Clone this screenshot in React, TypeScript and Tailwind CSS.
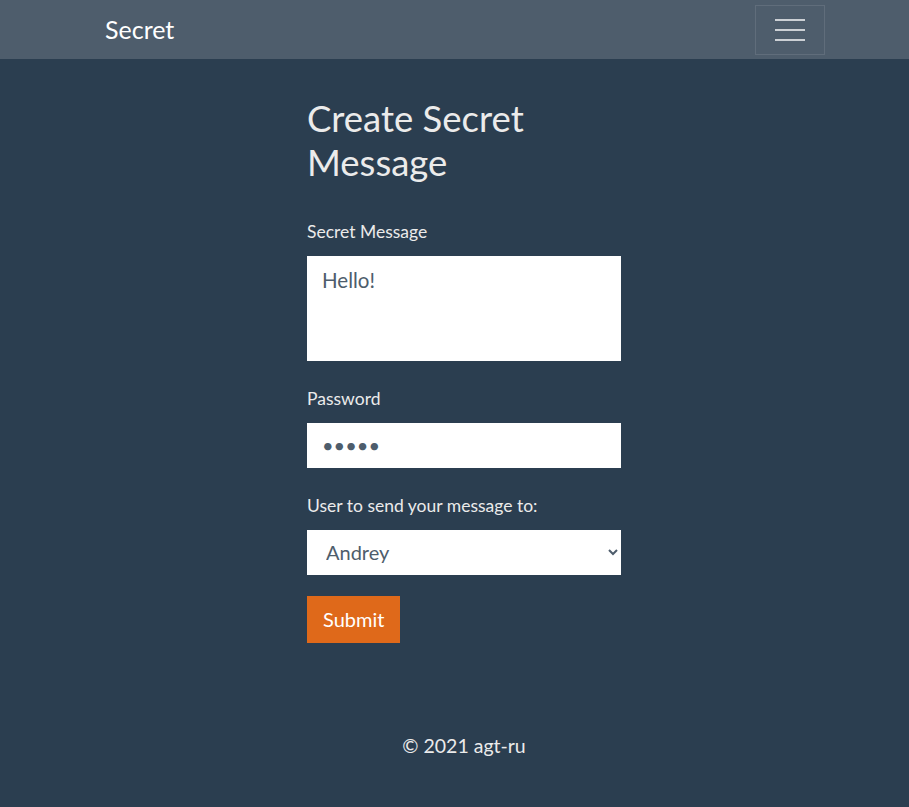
import React from "react";

export default function App() {
  return (
    <div className="min-h-[807px] bg-[#2b3e50] text-[#ebebeb] flex flex-col" style={{ fontFamily: "Lato, 'Noto Sans', sans-serif" }}>
      <nav className="h-[59px] bg-[#4e5d6c] flex items-center justify-between pl-[105px] pr-[84px]">
        <span className="text-[25px] text-white leading-none -mt-[1px]">Secret</span>
        <button className="w-[70px] h-[50px] border border-white/10 flex flex-col items-center justify-center gap-[8px]">
          <span className="block w-[30px] h-[2px] bg-[#ccd0d5]"></span>
          <span className="block w-[30px] h-[2px] bg-[#ccd0d5]"></span>
          <span className="block w-[30px] h-[2px] bg-[#ccd0d5]"></span>
        </button>
      </nav>
      <main className="pl-[307px] pt-[38px]">
        <div className="w-[314px]">
          <h2 className="text-[36.5px] leading-[1.2] mb-[35px]">Create Secret Message</h2>
          <label className="block text-[17.5px] leading-[24px] mb-[12px]">Secret Message</label>
          <textarea
            className="block w-full h-[105px] bg-white text-[#4e5d6c] text-[20.5px] px-[15px] py-[9px] resize-none outline-none"
            defaultValue="Hello!"
          />
          <label className="block text-[17.5px] leading-[24px] mt-[26px] mb-[12px]">Password</label>
          <input
            type="password"
            defaultValue="Hello"
            className="block w-full h-[45px] bg-white text-[#4e5d6c] text-[20px] px-[15px] outline-none"
          />
          <label className="block text-[17.5px] leading-[24px] mt-[26px] mb-[12px]">User to send your message to:</label>
          <select className="block w-full h-[45px] bg-white text-[#4e5d6c] text-[20px] px-[15px] outline-none">
            <option>Andrey</option>
          </select>
          <button className="mt-[21px] bg-[#df691a] text-white text-[20px] px-[16px] h-[47px]">Submit</button>
        </div>
      </main>
      <footer className="ml-[307px] w-[314px] text-center text-[19.5px] mt-[88px]">© 2021 agt-ru</footer>
    </div>
  );
}
